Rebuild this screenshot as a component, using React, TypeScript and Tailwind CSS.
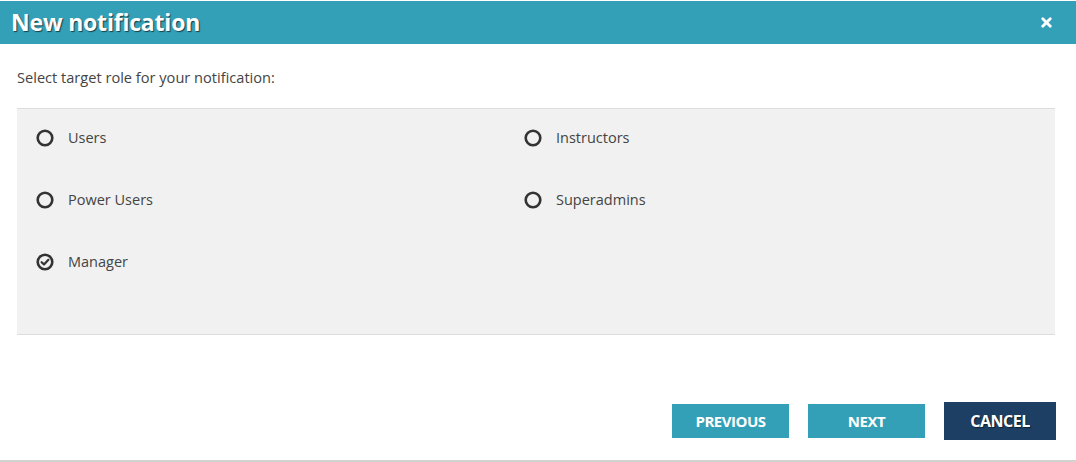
import { X } from "lucide-react";

const roles = [
  { label: "Users", checked: false },
  { label: "Instructors", checked: false },
  { label: "Power Users", checked: false },
  { label: "Superadmins", checked: false },
  { label: "Manager", checked: true },
];

function Radio({ checked }: { checked: boolean }) {
  return (
    <svg width="18" height="18" viewBox="0 0 18 18" className="shrink-0">
      <circle cx="9" cy="9" r="7.3" fill="none" stroke="#333" strokeWidth="2.6" />
      {checked && (
        <path d="M5.6 9.2 L8 11.4 L12.4 6.8" fill="none" stroke="#333" strokeWidth="2.2" strokeLinecap="round" strokeLinejoin="round" />
      )}
    </svg>
  );
}

export default function App() {
  return (
    <div
      className="w-[1076px] h-[462px] bg-white flex flex-col border-b-2 border-[#d2d2d2]"
      style={{ fontFamily: '"Open Sans", "Noto Sans", sans-serif' }}
    >
      <div className="mt-px h-[43px] bg-[#34a0b7] flex items-center justify-between pl-[11px] pr-[22px]">
        <h1 className="text-[23px] font-bold text-white tracking-[-0.2px] [text-shadow:1px_1px_1px_rgba(0,0,0,0.6)]">
          New notification
        </h1>
        <X className="w-[15px] h-[15px] text-white" strokeWidth={4.5} />
      </div>
      <p className="mt-[23px] ml-[17px] text-[14.6px] text-[#444]">
        Select target role for your notification:
      </p>
      <div className="mt-[19px] ml-[17px] mr-[21px] h-[227px] bg-[#f0f1f0] border-y border-[#dddddd] grid grid-cols-[488px_1fr] content-start gap-y-[38px] pt-[17px]">
        {roles.map((r) => (
          <label key={r.label} className="flex items-center gap-[14px] pl-[19px] h-6">
            <Radio checked={r.checked} />
            <span className="text-[14.5px] text-[#444]">{r.label}</span>
          </label>
        ))}
      </div>
      <div className="mt-auto mb-[20px] mr-[20px] flex items-center justify-end gap-[19px]">
        <button className="w-[117px] h-[34px] bg-[#34a0b7] text-white text-[15px] font-bold tracking-[-0.5px]">
          PREVIOUS
        </button>
        <button className="w-[117px] h-[34px] bg-[#34a0b7] text-white text-[15px] font-bold tracking-[-0.5px]">
          NEXT
        </button>
        <button className="w-[112px] h-[38px] bg-[#1c3f63] text-white text-[16px] font-bold tracking-[-0.5px] [text-shadow:1px_1px_1px_rgba(0,0,0,0.5)]">
          CANCEL
        </button>
      </div>
    </div>
  );
}
